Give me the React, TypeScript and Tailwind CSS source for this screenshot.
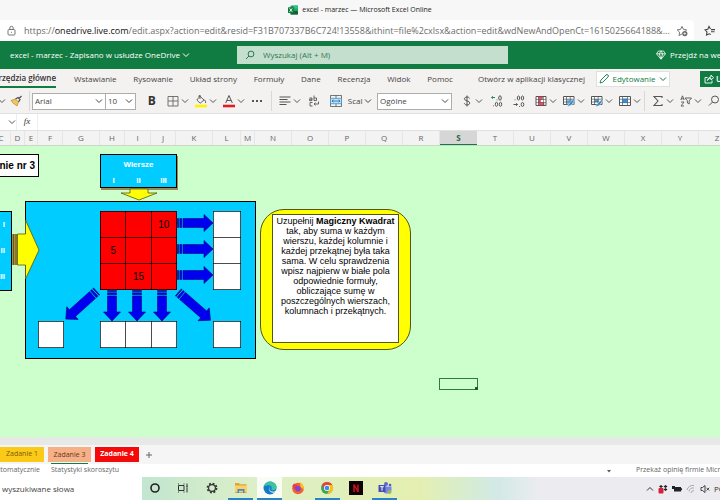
import type { ReactNode } from 'react'

// Excel Online open in a browser window, with the magic square worksheet

const RIBBON_TABS = ['Wstawianie', 'Rysowanie', 'Układ strony', 'Formuły', 'Dane', 'Recenzja', 'Widok', 'Pomoc']

const COLUMNS = [
  { name: 'C', width: 19 },
  { name: 'D', width: 14 },
  { name: 'E', width: 13 },
  { name: 'F', width: 25 },
  { name: 'G', width: 37 },
  { name: 'H', width: 25 },
  { name: 'I', width: 26 },
  { name: 'J', width: 25 },
  { name: 'K', width: 37 },
  { name: 'L', width: 28 },
  { name: 'M', width: 14 },
  ...'NOPQRSTUVWXYZ'.split('').map((name) => ({ name, width: 37 })),
]

const SQUARE = [
  ['', '', '10'],
  ['5', '', ''],
  ['', '15', ''],
]

function Chevron() {
  return (
    <svg className="w-2 h-2 shrink-0" viewBox="0 0 8 8" fill="none" stroke="currentColor" strokeWidth="1">
      <path d="M1 2.5 4 5.5 7 2.5" />
    </svg>
  )
}

interface ToolProps {
  label: string
  menu?: boolean
  children: ReactNode
}

function Tool({ label, menu, children }: ToolProps) {
  return (
    <button type="button" aria-label={label} className="flex items-center gap-0.5 shrink-0 text-[#555]">
      <svg className="w-3 h-3.5 shrink-0" viewBox="0 0 12 14" fill="none" stroke="currentColor" strokeWidth="1">
        {children}
      </svg>
      {menu && <Chevron />}
    </button>
  )
}

function Divider() {
  return <div className="w-px h-5 bg-[#d8d8d8] shrink-0" />
}

interface PickerProps {
  label: string
  value: string
  className: string
}

function Picker({ label, value, className }: PickerProps) {
  return (
    <div className={`relative shrink-0 h-[17px] bg-white border border-[#adadad] text-[#444] ${className}`}>
      <select aria-label={label} defaultValue={value} className="block w-full h-full pl-0.5 appearance-none bg-transparent text-[8px] leading-3">
        <option>{value}</option>
      </select>
      <div className="absolute right-0.5 top-0 h-full flex items-center pointer-events-none">
        <Chevron />
      </div>
    </div>
  )
}

function BrowserChrome() {
  return (
    <header className="bg-[#f7f7f7]">
      <div className="h-5 flex items-center justify-center gap-1 text-[7px] text-[#222]">
        <svg className="w-2.5 h-2.5" viewBox="0 0 10 10">
          <rect x="2.5" y="0.5" width="7.5" height="9" rx="0.8" fill="#21a366" />
          <rect x="6" y="0.5" width="4" height="3" fill="#33c481" />
          <rect x="2.5" y="6" width="7.5" height="3.5" rx="0.6" fill="#185c37" />
          <rect x="0" y="2.2" width="5.8" height="5.8" rx="0.6" fill="#107c41" />
          <path d="M1.6 3.4 4.2 6.8M4.2 3.4 1.6 6.8" stroke="#fff" strokeWidth="0.9" />
        </svg>
        <span>excel - marzec — Microsoft Excel Online</span>
      </div>
      <div className="h-[21px] flex items-center gap-2.5 pr-1">
        <div className="flex-1 min-w-0 h-full bg-white rounded-r flex items-center pl-1.5 pr-1.5">
          <svg className="w-3 h-3 shrink-0" viewBox="0 0 12 12" fill="none" stroke="#777">
            <rect x="2" y="4.5" width="7" height="5.5" rx="1" />
            <path d="M3.8 4.5V3a1.7 1.7 0 0 1 3.4 0v1.5M5.5 6.8v1" />
          </svg>
          <div
            role="textbox"
            aria-label="Adres"
            className="ml-1.5 flex-1 min-w-0 whitespace-nowrap overflow-hidden text-[9px] text-[#6c6c6c]"
          >
            https://<span className="text-[#111]">onedrive.live.com</span>
            /edit.aspx?action=edit&amp;resid=F31B707337B6C724!13558&amp;ithint=file%2cxlsx&amp;action=edit&amp;wdNewAndOpenCt=1615025664188&amp;...
          </div>
          <button type="button" aria-label="Dodaj do ulubionych">
            <svg className="w-3 h-3" viewBox="0 0 12 12" fill="none" stroke="#666" strokeWidth="0.9">
              <path d="M6 9 3 10.5l.6-3.3L1.2 4.9l3.3-.5L6 1.4l1.5 3 3.2.5-1 1" />
              <circle cx="8.8" cy="8.6" r="2.6" fill="#666" stroke="none" />
              <path d="M8.8 7.2V10M7.4 8.6h2.8" stroke="#fff" strokeWidth="0.7" />
            </svg>
          </button>
        </div>
        <button type="button" aria-label="Ulubione">
          <svg className="w-3 h-3" viewBox="0 0 12 12" fill="none" stroke="#444" strokeWidth="1.1">
            <path d="M6.5 4 5 1.4 3.8 4.2 1 4.8l2 2.1-.5 3.2 2.7-1.3 1.5.8M7 4.6h4M7 6.8h3.5" />
          </svg>
        </button>
      </div>
    </header>
  )
}

function TitleBar() {
  return (
    <div className="h-7 bg-[#107c41] text-white text-[8px] font-medium flex items-center pl-2.5">
      <button type="button" className="w-[227px] flex items-center gap-0.5 whitespace-nowrap">
        excel - marzec - Zapisano w usłudze OneDrive
        <Chevron />
      </button>
      <label className="flex-1 max-w-[271px] h-[18px] bg-[#c5dfcf] flex items-center gap-2 pl-2 text-[#1c6b42]">
        <svg className="w-2.5 h-2.5 shrink-0" viewBox="0 0 10 10" fill="none" stroke="currentColor" strokeWidth="0.9">
          <circle cx="6" cy="4" r="2.9" />
          <path d="M3.9 6.1 1 9" />
        </svg>
        <input
          aria-label="Wyszukaj"
          placeholder="Wyszukaj (Alt + M)"
          className="w-full bg-transparent text-[8px] placeholder:text-[#2d7a50]"
        />
      </label>
      <button type="button" className="ml-auto w-16 flex items-center gap-1 whitespace-nowrap">
        <svg className="w-2.5 h-2.5 shrink-0" viewBox="0 0 10 10" fill="none" stroke="currentColor" strokeWidth="0.8">
          <path d="M2.5 1h5l2 2.8L5 9.3.5 3.8zM.5 3.8h9M3.3 3.8 5 9l1.7-5.2L5 1z" />
        </svg>
        Przejdź na wersję Premium
      </button>
    </div>
  )
}

function Ribbon() {
  return (
    <div className="bg-[#f3f2f1] text-[8px] text-[#444] border-b border-[#e0e0e0]">
      <nav className="h-5 flex items-center overflow-hidden whitespace-nowrap">
        <a href="#start" className="w-14 h-[19px] self-start flex items-center justify-end border-b-2 border-[#107c41] font-semibold text-[#333]">
          Narzędzia główne
        </a>
        <div className="ml-[18px] w-[379px] flex justify-between">
          {RIBBON_TABS.map((tab) => (
            <a key={tab} href="#tab">
              {tab}
            </a>
          ))}
        </div>
        <a href="#desktop" className="ml-[25px] w-[104px]">
          Otwórz w aplikacji klasycznej
        </a>
        <button type="button" className="ml-3.5 w-[74px] h-4 bg-white border border-[#e0e0e0] flex items-center justify-center gap-[3px] font-medium text-[#107c41]">
          <svg className="w-2.5 h-2.5 shrink-0" viewBox="0 0 10 10" fill="none" stroke="currentColor" strokeWidth="0.9">
            <path d="M1 9l.8-2.8L7 1a1.3 1.3 0 0 1 2 2L3.8 8.2z" />
          </svg>
          Edytowanie
          <Chevron />
        </button>
        <button type="button" className="ml-auto w-5 h-4 shrink-0 bg-[#107c41] text-white font-semibold flex items-center gap-0.5 pl-1 overflow-hidden">
          <svg className="w-2.5 h-2.5 shrink-0" viewBox="0 0 10 10" fill="none" stroke="currentColor" strokeWidth="0.9">
            <path d="M3.5 3.5H1V9h7V6.5M3.5 6.5C3.8 4 5.5 3 7 3V1l2.5 2.7L7 6V4.3c-1.5 0-2.7.7-3.5 2.2z" />
          </svg>
          Udostępnij
        </button>
      </nav>

      <div className="h-6 flex items-center overflow-hidden">
        <div className="-ml-0.5 flex items-center gap-1 text-[#555]">
          <Chevron />
          <Tool label="Malarz formatów">
            <path d="M1 6.5 5.5 5l3 3L7 12 3.5 9.5z" fill="#f0c85a" stroke="#b88a25" strokeWidth="0.7" />
            <path d="M5.5 5 8 3.5l2 2L8.5 8M9 4.5 11.5 2" strokeWidth="1.3" />
          </Tool>
        </div>
        <div className="ml-[7px] flex items-center gap-0.5">
          <Divider />
          <div className="flex">
            <Picker label="Czcionka" value="Arial" className="w-[74px]" />
            <Picker label="Rozmiar" value="10" className="w-[31px] -ml-px" />
          </div>
        </div>
        <button type="button" aria-label="Pogrubienie" className="ml-2.5 w-3 text-[12px] leading-4 font-bold text-[#333]">
          B
        </button>
        <div className="ml-2.5 flex items-center gap-1.5">
          <Tool label="Obramowanie" menu>
            <path d="M1 2.5h10v9.500H1zM6 2.500V12M1 7h10" strokeWidth="0.8" />
          </Tool>
          <Tool label="Kolor wypełnienia" menu>
            <path d="M5 2.2 9 6 5.200 9.200 1.800 6zM5 2.200V5M9 6c1.500 0 1.800 1.500 1.500 3M4 3V1.600h1.600" strokeWidth="0.9" />
            <path d="M0 12h12" stroke="#fdf400" strokeWidth="2.6" />
          </Tool>
          <Tool label="Kolor czcionki" menu>
            <path d="M2.700 9 6 1.500 9.300 9M3.800 6.500h4.400" />
            <path d="M0 12h12" stroke="#e01b22" strokeWidth="2.6" />
          </Tool>
          <Tool label="Więcej opcji">
            <path d="M1 7h2M5 7h2M9 7h2" strokeWidth="1.8" />
          </Tool>
        </div>
        <div className="ml-2 flex items-center gap-[7px]">
          <Divider />
          <Tool label="Wyrównanie" menu>
            <path d="M0.5 3h11M0.5 5.500h8M0.5 8h11M0.5 10.500h7" />
          </Tool>
          <Tool label="Zawijaj tekst">
            <path d="M1.500 4h2.500v2.600H1.500V5.200H4M6 1.500v5.100h2.500V4H6M4.500 8.500H2V12h2.500M6 10h4.500V7.500M7.500 8.700 6 10l1.500 1.300" strokeWidth="0.9" />
          </Tool>
        </div>
        <button type="button" className="ml-2.5 w-11 flex items-center justify-between">
          <svg className="w-3 h-3" viewBox="0 0 12 12" fill="none" stroke="#555" strokeWidth="0.8">
            <path d="M.5.5h11v11H.5zM6 .5v3M6 8.500v3" />
            <path d="M.5 3.300h11v5.400H.5z" fill="#bfe0f5" stroke="#3f8fc9" />
            <path d="M2 6h8M3.500 4.800 2 6l1.500 1.200M8.500 4.800 10 6 8.500 7.200" stroke="#1b6fae" />
          </svg>
          <span className="pl-1">Scal</span>
          <Chevron />
        </button>
        <Picker label="Format liczb" value="Ogólne" className="ml-[5px] w-[75px]" />
        <div className="ml-[9px] flex items-center gap-2">
          <Tool label="Format walutowy" menu>
            <path d="M8.500 4.500C8 3.200 7 3 6 3c-1.400 0-2.500.7-2.500 1.900C3.500 7.500 8.700 6.300 8.700 9c0 1.300-1.200 2-2.700 2-1.300 0-2.300-.5-2.700-1.700M6 1.500v11" />
          </Tool>
          <Tool label="Zwiększ dziesiętne">
            <path d="M4 3.500H.5M1.800 2.200.5 3.500l1.300 1.300" stroke="#2b8a57" />
            <path d="M6 5.500v.8" />
            <ellipse cx="9" cy="4" rx="1.300" ry="2.200" />
            <path d="M2.500 11.500v.8" />
            <ellipse cx="5.500" cy="10.300" rx="1.200" ry="2" />
            <ellipse cx="9.500" cy="10.300" rx="1.200" ry="2" />
          </Tool>
        </div>
        <div className="ml-2.5 flex items-center gap-2.5">
          <Tool label="Zmniejsz dziesiętne">
            <path d="M2 5.500v.8" />
            <ellipse cx="5.500" cy="4" rx="1.200" ry="2" />
            <ellipse cx="9.500" cy="4" rx="1.200" ry="2" />
            <path d="M.5 10.500h4M3.200 9.200l1.300 1.300-1.300 1.300" />
            <path d="M6.500 12v.8" />
            <ellipse cx="9.500" cy="10.500" rx="1.300" ry="2" />
          </Tool>
          <div className="flex items-center gap-1.5">
            <Tool label="Formatowanie warunkowe" menu>
              <path d="M1 2.500h10v9H1z" fill="#fff" />
              <path d="M3.500 3h4v2.500h-4zM3.500 5.800h2v2.500h-2zM3.500 8.600H9v2.500H3.500z" fill="#e5556b" stroke="#c93348" strokeWidth="0.5" />
              <path d="M3.500 2.500v9M8.500 2.500v9M1 5.500h10M1 8.500h10" strokeWidth="0.6" />
            </Tool>
            <Tool label="Formatuj jako tabelę" menu>
              <path d="M.5 2.500H11v8H.5z" fill="#fff" />
              <path d="M3.500 5.500H11v5H3.500z" fill="#77bdea" stroke="none" />
              <path d="M3.500 2.500v8M7.200 2.500v8M.5 5.200H11M.5 8H11" strokeWidth="0.7" />
              <path d="M11.500 4 7 8.500 4 13l4.500-2L12 5" fill="#2f86c6" stroke="#fff" strokeWidth="0.5" />
            </Tool>
            <Tool label="Style komórek" menu>
              <path d="M.5 2.500H11v8H.5z" fill="#fff" />
              <path d="M3.500 5.200h4v3h-4z" fill="#4a9fd8" stroke="none" />
              <path d="M3.500 2.500v8M7.200 2.500v8M.5 5.200H11M.5 8H11" strokeWidth="0.7" />
              <path d="M11.500 5 7 9l-3 4 4.500-1.500L12 6" fill="#2f86c6" stroke="#fff" strokeWidth="0.5" />
            </Tool>
            <Tool label="Wstaw komórki" menu>
              <path d="M.5 2.500h11v9H.5z" fill="#fff" />
              <path d="M3.500 2.500v9M8.500 2.500v9M.5 5.200h11M.5 8.500h11" strokeWidth="0.7" />
              <path d="M3.500 5h5v3.700h-5z" fill="#3c8fd0" stroke="#2474b5" strokeWidth="0.6" />
            </Tool>
          </div>
        </div>
        <div className="ml-[3px] flex items-center gap-[7px]">
          <Divider />
          <div className="flex items-center gap-1.5">
            <Tool label="Autosumowanie" menu>
              <path d="M10 4V2.500H2L6 7l-4 4.500h8V10" strokeWidth="1.1" />
            </Tool>
            <Tool label="Sortuj i filtruj" menu>
              <path d="M.8 6 2.500 1.800 4.200 6M1.400 4.800h2.200M1 8h3l-3 4h3" strokeWidth="0.9" />
              <path d="M5 4h6.500L9.200 6.800V10l-1.800-1V6.800z" strokeWidth="0.9" />
            </Tool>
            <Tool label="Znajdź">
              <circle cx="7" cy="5.5" r="3.5" />
              <path d="M4.500 8 1 11.500" />
            </Tool>
          </div>
        </div>
      </div>
    </div>
  )
}

function FormulaBar() {
  return (
    <div className="h-[17px] flex items-center bg-white border-b border-[#e1e1e1] text-[#555]">
      <button type="button" aria-label="Pole nazwy" className="pl-2">
        <Chevron />
      </button>
      <label htmlFor="formula" className="w-[22px] h-full border-x border-[#eee] flex items-center justify-center font-['Liberation_Serif',serif] italic text-[9px] text-[#333]">
        fx
      </label>
      <input id="formula" aria-label="Formuła" className="flex-1 min-w-0 h-full" />
    </div>
  )
}

function ColumnHeaders() {
  return (
    <div className="h-[15px] shrink-0 flex bg-[#f3f3f3] overflow-hidden text-[8px] text-[#666] border-b border-[#c9d6c9]">
      <div className="-ml-2 flex">
        {COLUMNS.map(({ name, width }) => (
          <div
            key={name}
            style={{ width }}
            className={
              name === 'S'
                ? 'flex items-center justify-center bg-[#d6d6d6] border-b border-[#107c41] font-bold text-[#1d6b42]'
                : 'flex items-center justify-center border-r border-[#e6e6e6]'
            }
          >
            {name}
          </div>
        ))}
      </div>
    </div>
  )
}

interface StripedArrowProps {
  x: number
  y: number
  angle?: number
  length?: number
}

// Block arrow with a striped tail, starts at x,y and points right before rotation
function StripedArrow({ x, y, angle = 0, length = 36 }: StripedArrowProps) {
  return (
    <g transform={`translate(${x} ${y}) rotate(${angle})`} fill="#0000f0" stroke="#00007a" strokeWidth="0.6">
      <path d="M.5-4.500h1v9h-1zM2.800-4.500h2v9h-2z" />
      <path d={`M6-4.500H${length - 9}V-8.500L${length} 0 ${length - 9} 8.500V4.500H6z`} />
    </g>
  )
}

interface CellStackProps {
  label: string
  rows: string[][]
  className: string
}

function CellStack({ label, rows, className }: CellStackProps) {
  return (
    <table aria-label={label} className={`absolute table-fixed border-collapse border border-black text-center ${className}`}>
      <tbody>
        {rows.map((row, r) => (
          <tr key={r}>
            {row.map((value, c) => (
              <td key={c} className="h-[26px] p-0 border border-black/70">
                {value}
              </td>
            ))}
          </tr>
        ))}
      </tbody>
    </table>
  )
}

function Worksheet() {
  return (
    <main className="relative flex-1 min-h-[290px] overflow-hidden bg-[#ccffcc] font-['Liberation_Sans',sans-serif] text-black">
      <h1 className="absolute left-[-50px] top-[8px] w-[89px] h-[23px] pr-[3px] bg-white border border-black flex items-center justify-end whitespace-nowrap text-[10px] font-bold">
        Zadanie nr 3
      </h1>

      <div className="absolute left-[100px] top-[8px] w-[77px] h-[34px] bg-[#00ccff] border border-black shadow-[1px_2px_0_#9b8a55] pt-1 text-white text-center text-[8px] leading-3 font-bold">
        <p>Wiersze</p>
        <div className="mt-1 grid grid-cols-3">
          <span>I</span>
          <span>II</span>
          <span>III</span>
        </div>
      </div>

      <div className="absolute left-[-60px] top-[65px] w-[72px] h-[80px] bg-[#00ccff] border border-black pr-1.5 flex flex-col justify-around text-right text-white text-[8px] font-bold">
        <span>I</span>
        <span>II</span>
        <span>III</span>
      </div>

      <div className="absolute left-[25px] top-[55px] w-[231px] h-[158px] bg-[#00ccff] border border-black" />

      <svg className="absolute left-0 top-0 w-[260px] h-[220px]" viewBox="0 0 260 220">
        <path d="M130 43h18v4h9l-18 7-18-7h9z" fill="#ffff00" stroke="#55551a" strokeWidth="0.8" />
        <path d="M12 88h5.500v31H12z" fill="#a8933c" />
        <path d="M13.500 88v31M16 88v31" stroke="#4e421a" strokeWidth="0.7" />
        <path d="M17.500 88h8V74L39 104l-13.500 29v-14h-8z" fill="#ffff00" stroke="#55551a" strokeWidth="0.8" />
        <StripedArrow x={177} y={77} />
        <StripedArrow x={177} y={103} />
        <StripedArrow x={177} y={129} />
        <StripedArrow x={112} y={144} angle={90} length={31} />
        <StripedArrow x={137} y={144} angle={90} length={31} />
        <StripedArrow x={162} y={144} angle={90} length={31} />
        <StripedArrow x={97} y={145} angle={138} length={42} />
        <StripedArrow x={178} y={146} angle={41} length={43} />
      </svg>

      <CellStack label="Magiczny kwadrat" rows={SQUARE} className="left-[100px] top-[65px] w-[77px] bg-[#ff0000] text-[10px]" />
      <CellStack label="Sumy wierszy" rows={[[''], [''], ['']]} className="left-[213px] top-[65px] w-[28px] bg-white" />
      <CellStack label="Suma lewej przekątnej" rows={[['']]} className="left-[38px] top-[175px] w-[26px] bg-white" />
      <CellStack label="Sumy kolumn" rows={[['', '', '']]} className="left-[100px] top-[175px] w-[77px] bg-white" />
      <CellStack label="Suma prawej przekątnej" rows={[['']]} className="left-[213px] top-[175px] w-[28px] bg-white" />

      <div className="absolute left-[260px] top-[63px] w-[151px] h-[141px] rounded-[24px] bg-[#ffff00] border border-[#55551a] pl-[11px] pt-1">
        <p className="w-[127px] h-[129px] bg-white border border-[#55551a] text-center text-[9px] leading-[10px] pt-px whitespace-nowrap">
          Uzupełnij <b>Magiczny Kwadrat</b>
          <br />
          tak, aby suma w każdym
          <br />
          wierszu, każdej kolumnie i
          <br />
          każdej przekątnej była taka
          <br />
          sama. W celu sprawdzenia
          <br />
          wpisz najpierw w białe pola
          <br />
          odpowiednie formuły,
          <br />
          obliczające sumę w
          <br />
          poszczególnych wierszach,
          <br />
          kolumnach i przekątnych.
        </p>
      </div>

      {/* Active cell */}
      <div className="absolute left-[439px] top-[232px] w-[39px] h-[12px] border border-[#2c7a3f]">
        <div className="absolute -right-px -bottom-px w-[3px] h-[3px] bg-[#1d5c2e]" />
      </div>
    </main>
  )
}

function SheetTabs() {
  return (
    <footer>
      <div className="h-2 bg-[#e6e9e6]" />
      <div className="h-[19px] bg-[#f5f5f5] flex items-start gap-1 pt-0.5 text-[7px]">
        <button type="button" className="w-11 h-[15px] bg-[#fbc918] text-[#7a5c0a]">
          Zadanie 1
        </button>
        <button type="button" className="w-[43px] h-[17px] flex flex-col items-center text-[#5f3718]">
          <span className="w-full h-[15px] leading-[15px] bg-[#f6b088]">Zadanie 3</span>
          <span className="mt-px w-[37px] h-px bg-[#107c41]" />
        </button>
        <button type="button" className="w-11 h-[15px] bg-[#f50a0a] text-white font-bold">
          Zadanie 4
        </button>
        <button type="button" aria-label="Nowy arkusz" className="w-3 h-[15px] flex items-center justify-center text-[#666]">
          <svg className="w-2 h-2" viewBox="0 0 8 8" stroke="currentColor">
            <path d="M4 1v6M1 4h6" />
          </svg>
        </button>
      </div>
      <div className="h-[13px] bg-white flex items-center text-[7px] text-[#666] overflow-hidden whitespace-nowrap">
        <span className="w-10 shrink-0 flex justify-end">Oblicz automatycznie</span>
        <span className="ml-[11px]">Statystyki skoroszytu</span>
        <svg className="ml-auto w-1.5 h-1.5" viewBox="0 0 6 6" fill="#555">
          <path d="M1 2h4L3 4.500z" />
        </svg>
        <a href="#opinia" className="ml-6 w-[84px]">
          Przekaż opinię firmie Microsoft
        </a>
      </div>
    </footer>
  )
}

interface TaskIconProps {
  label: string
  open?: boolean
  active?: boolean
  children: ReactNode
}

function TaskIcon({ label, open, active, children }: TaskIconProps) {
  return (
    <button
      type="button"
      aria-label={label}
      className={`w-[25px] h-full flex items-center justify-center border-b-2 ${open ? 'border-[#2a84c4]' : 'border-transparent'} ${active ? 'bg-white/80' : ''}`}
    >
      <svg className="w-3.5 h-3.5" viewBox="0 0 14 14">
        {children}
      </svg>
    </button>
  )
}

function Taskbar() {
  return (
    <div className="h-[23px] flex items-center bg-[linear-gradient(to_right,#c2e6d0_20%,#dcefc8_35%,#e4efb0_58%,#d8edcc_64%,#d2e9e6_69%,#ececf0_75%)]">
      <input
        aria-label="Wyszukiwanie"
        defaultValue="wyszukiwane słowa"
        className="w-[142px] h-full bg-white pl-0.5 text-[8px] text-[#444]"
      />
      <div className="w-[255px] h-full flex items-center justify-between">
        <TaskIcon label="Cortana">
          <circle cx="7" cy="7" r="4" fill="none" stroke="#222" strokeWidth="1.6" />
        </TaskIcon>
        <TaskIcon label="Widok zadań">
          <path d="M2.500 4.500H8v5H2.500zM2.500 2.500v1M8 2.500v1M2.500 10.500v1M8 10.500v1M11 2.500V5M11 7v4.500" fill="none" stroke="#333" />
          <path d="M10.300 5h1.500v1.500h-1.500z" fill="#333" />
        </TaskIcon>
        <TaskIcon label="Ustawienia">
          <circle cx="7" cy="7" r="4.5" fill="none" stroke="#333" strokeWidth="1.8" strokeDasharray="1.9 1.634" />
          <circle cx="7" cy="7" r="3.4" fill="none" stroke="#333" strokeWidth="1.2" />
        </TaskIcon>
        <TaskIcon label="Eksplorator plików" open>
          <path d="M1 2h4l1 1.200h6.500V12H1z" fill="#e5a431" />
          <path d="M1 4.500h12V11H1z" fill="#fbd168" />
          <path d="M3.500 12V8h7v4H9V9.800H5V12z" fill="#3b8dcf" />
        </TaskIcon>
        <TaskIcon label="Edge" open active>
          <circle cx="7" cy="7" r="6.5" fill="#1479c9" />
          <path d="M.8 6C1.500 2.500 4 .5 7 .5c3.700 0 6.500 2.700 6.500 5.500 0 2-1.500 3.300-3.500 3.300-1.500 0-2-.8-1.500-1.600C9.300 6 7.500 4.300 5.300 4.300 3.200 4.300 1.500 5 .8 6z" fill="#3cc3a2" />
          <path d="M7.200 6c-1.500 1.800-.3 4.300 2.300 4.600 1.500.2 2.800-.3 3.800-1.100l-.8 1.700c-3 1.300-6.300-.2-6.300-3.200 0-1 .4-1.600 1-2z" fill="#fff" opacity="0.9" />
        </TaskIcon>
        <TaskIcon label="Firefox">
          <circle cx="7" cy="7.5" r="5.8" fill="#f4622e" />
          <path d="M9 1c2.500 1.500 4 4 3.700 7.500L9.500 6z" fill="#fbc02e" />
          <path d="M1.300 5 3 2.500l1.500 1.300L7 4 3.500 9z" fill="#e63a4d" />
          <circle cx="7" cy="7.7" r="2.8" fill="#8146c9" />
        </TaskIcon>
        <TaskIcon label="Chrome" open>
          <circle cx="7" cy="7" r="6" fill="#34a853" />
          <path d="M1.800 4A6 6 0 0 1 12.300 4H7L4.400 8.500z" fill="#e8453c" />
          <path d="M12.300 4A6 6 0 0 1 7 13l2.600-4.500L7 4z" fill="#fbbf12" />
          <circle cx="7" cy="7" r="3" fill="#fff" />
          <circle cx="7" cy="7" r="2.3" fill="#4285f4" />
        </TaskIcon>
        <TaskIcon label="Netflix">
          <path d="M0 0h14v14H0z" fill="#0d0505" />
          <path d="M5 11V3.500l4 7.500V3.500" fill="none" stroke="#d0101c" strokeWidth="1.5" />
        </TaskIcon>
        <TaskIcon label="Teams" open>
          <circle cx="8" cy="3" r="2" fill="#6068c8" />
          <circle cx="12" cy="4" r="1.3" fill="#5059b8" />
          <path d="M5.500 5.500h8V9c0 2-1.500 2.500-2.500 2.500-1 1.500-5 1.500-5.500-1z" fill="#7b83eb" />
          <path d="M.5 4h7v7h-7z" fill="#454eb2" />
          <path d="M2.200 5.700h3.600M4 5.700v4" stroke="#fff" />
          <circle cx="11.5" cy="11" r="2" fill="#8cc152" />
        </TaskIcon>
      </div>
      <div className="ml-auto w-[74px] flex items-center gap-1 text-[#333] text-[8px] overflow-hidden whitespace-nowrap">
        <svg className="w-2 h-2 shrink-0" viewBox="0 0 8 8" fill="none" stroke="currentColor">
          <path d="M1 5.500 4 2.500l3 3" />
        </svg>
        <svg className="w-2.5 h-2.5 shrink-0" viewBox="0 0 10 10" fill="#222">
          <path d="M3 1l2 1.500L3 4 1 2.500zM7.500 1l2 1.500-2 1.500-2-1.500zM7.500 4l2 1.500-2 1.500-2-1.500z" />
          <rect x="0.5" y="4" width="5" height="5.5" rx="1" fill="#d61f3a" />
        </svg>
        <svg className="w-2.5 h-2.5 shrink-0" viewBox="0 0 10 10" fill="#222">
          <path d="M2 3h7v4.500H2zM9 4.200h1v2H9zM0 2h3v3H0z" />
        </svg>
        <svg className="w-2.5 h-2.5 shrink-0 text-[#999]" viewBox="0 0 10 10" fill="none" stroke="currentColor" strokeWidth="0.8">
          <path d="M1 6a6 6 0 0 1 7-4.500M3 7.500A4 4 0 0 1 8 4M5 9a3 3 0 0 1 3-2.500" />
        </svg>
        <svg className="w-2.5 h-2.5 shrink-0" viewBox="0 0 10 10" fill="none" stroke="currentColor" strokeWidth="0.9">
          <path d="M1 3.500h1.500L5 1.500v7l-2.500-2H1zM6.500 3.800l2.700 2.700M9.200 3.800 6.500 6.500" />
        </svg>
        <span>POL</span>
      </div>
    </div>
  )
}

export default function App() {
  return (
    <div className="min-h-screen flex flex-col overflow-hidden bg-white font-['Open_Sans',sans-serif]">
      <BrowserChrome />
      <TitleBar />
      <Ribbon />
      <FormulaBar />
      <ColumnHeaders />
      <Worksheet />
      <SheetTabs />
      <Taskbar />
    </div>
  )
}
